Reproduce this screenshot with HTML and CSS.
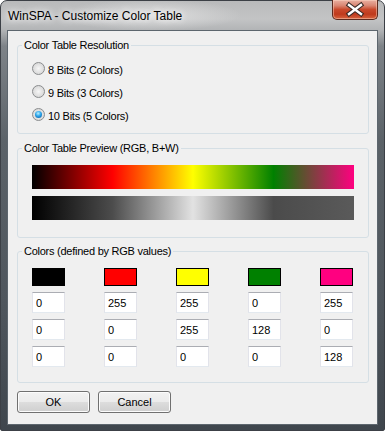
FILE: index.html
```html
<!DOCTYPE html>
<html lang="en">
<head>
  <meta charset="UTF-8">
  <title>WinSPA - Customize Color Table</title>
  <link rel="stylesheet" href="styles.css">
</head>
<body>

  <div class="window">
    <div class="titlebar">
      <span class="title">WinSPA - Customize Color Table</span>
      <button class="close-button">
        <svg width="44" height="19" viewBox="0 0 44 19">
          <path d="M16 5 L28 14 M28 5 L16 14" stroke="#3b2a26" stroke-width="4.6" stroke-linecap="square"/>
          <path d="M16 5 L28 14 M28 5 L16 14" stroke="#ffffff" stroke-width="2.4" stroke-linecap="square"/>
        </svg>
      </button>
    </div>

    <div class="client">

      <div class="group">
        <span class="group-title">Color Table Resolution</span>
        <div class="radios">
          <label class="radio-row"><span class="radio"></span>8 Bits (2 Colors)</label>
          <label class="radio-row"><span class="radio"></span>9 Bits (3 Colors)</label>
          <label class="radio-row"><span class="radio checked"></span>10 Bits (5 Colors)</label>
        </div>
      </div>

      <div class="group group-preview">
        <span class="group-title">Color Table Preview (RGB, B+W)</span>
        <div class="bar bar-rgb"></div>
        <div class="bar bar-gray"></div>
      </div>

      <div class="group group-colors">
        <span class="group-title">Colors (defined by RGB values)</span>
        <div class="color-grid">
          <div class="swatch" style="background:#000000"></div>
          <div class="swatch" style="background:#ff0000"></div>
          <div class="swatch" style="background:#ffff00"></div>
          <div class="swatch" style="background:#008000"></div>
          <div class="swatch" style="background:#ff0080"></div>

          <input class="value" type="text" value="0">
          <input class="value" type="text" value="255">
          <input class="value" type="text" value="255">
          <input class="value" type="text" value="0">
          <input class="value" type="text" value="255">

          <input class="value" type="text" value="0">
          <input class="value" type="text" value="0">
          <input class="value" type="text" value="255">
          <input class="value" type="text" value="128">
          <input class="value" type="text" value="0">

          <input class="value" type="text" value="0">
          <input class="value" type="text" value="0">
          <input class="value" type="text" value="0">
          <input class="value" type="text" value="0">
          <input class="value" type="text" value="128">
        </div>
      </div>

      <div class="buttons">
        <button class="dialog-button">OK</button>
        <button class="dialog-button">Cancel</button>
      </div>

    </div>
  </div>

</body>
</html>
```

FILE: styles.css
```css
html, body {
  margin: 0;
  padding: 0;
  background: #ffffff;
}
body {
  font-family: "Liberation Sans", Arial, sans-serif;
  font-size: 11px;
  color: #000000;
}
.window {
  box-sizing: border-box;
  width: 385px;
  height: 431px;
  display: flex;
  flex-direction: column;
  padding: 0 6px 5px 6px;
  border: 1px solid #3c4046;
  border-radius: 7px 7px 2px 2px;
  background:
    radial-gradient(ellipse 90px 16px at 150px 14px, rgba(235, 235, 235, 0.7), rgba(235, 235, 235, 0)),
    linear-gradient(to bottom, #b9babb 0, #c3c4c5 18px, #b2b4b6 29px, #7e8388 45px, #5b6268 140px, #4f565d 300px, #3f464d 100%);
}
.titlebar {
  height: 29px;
  display: flex;
  justify-content: space-between;
  align-items: flex-start;
}
.title {
  margin-top: 8px;
  padding-left: 1px;
  font-size: 12px;
  text-shadow: 0 0 6px #ffffff, 0 0 10px rgba(255, 255, 255, 0.8);
}
.close-button {
  width: 46px;
  height: 20px;
  padding: 0;
  margin: -1px 0 0 0;
  border: 1px solid #5c2a1f;
  border-top: none;
  border-radius: 0 0 5px 5px;
  background: linear-gradient(to bottom, #e9b0a2 0, #d98571 30%, #c9492c 50%, #bf3a1d 75%, #d8643f 100%);
  box-shadow: inset 0 0 0 1px rgba(255, 220, 200, 0.45);
  display: flex;
  align-items: center;
  justify-content: center;
}
.client {
  flex: 1;
  display: flex;
  flex-direction: column;
  padding: 0 8px 0 9px;
  border: 1px solid #5d666e;
  background: #f0f0f0;
}
.group {
  margin-top: 14px;
  border: 1px solid #d5dfe5;
  border-radius: 3px;
  padding: 0 14px 6px 14px;
  letter-spacing: -0.25px;
}
.group-title {
  display: block;
  width: max-content;
  margin: -7px 0 0 -10px;
  padding: 0 2px;
  line-height: 13px;
  background: #f0f0f0;
}
.radios {
  padding-top: 6px;
}
.radio-row {
  height: 23px;
  display: flex;
  align-items: center;
  gap: 3px;
}
.radio {
  box-sizing: border-box;
  width: 13px;
  height: 13px;
  margin-top: -2px;
  border-radius: 50%;
  border: 1px solid #8a8c8e;
  background: radial-gradient(circle at 50% 50%, #f6f6f6 0, #e4e4e4 45%, #cfcfcf 100%);
  display: flex;
  align-items: center;
  justify-content: center;
}
.radio.checked::after {
  content: "";
  width: 7px;
  height: 7px;
  border-radius: 50%;
  background: radial-gradient(circle at 45% 35%, #b8f0ff 0, #2aa4ea 45%, #0a4f94 100%);
}
.group-preview {
  padding-bottom: 17px;
}
.bar {
  height: 24px;
}
.bar-rgb {
  margin-top: 10px;
  background: linear-gradient(to right, #000000 0%, #ff0000 25%, #ffff00 50%, #008000 75%, #ff0080 100%);
}
.bar-gray {
  margin-top: 7px;
  background: linear-gradient(to right, #000000 0%, #4c4c4c 25%, #e2e2e2 50%, #4b4b4b 75%, #5a5a5a 100%);
}
.group-colors {
  margin-top: 13px;
  padding-bottom: 15px;
}
.color-grid {
  margin-top: 10px;
  display: grid;
  grid-template-columns: repeat(5, 33px);
  column-gap: 39px;
  row-gap: 6px;
}
.swatch {
  box-sizing: border-box;
  height: 18px;
  border: 1px solid #000000;
}
.value {
  box-sizing: border-box;
  width: 33px;
  height: 21px;
  margin: 0;
  padding: 0 0 0 3px;
  font-family: "Liberation Sans", Arial, sans-serif;
  font-size: 11px;
  color: #000000;
  background: #ffffff;
  border: 1px solid #e2e3ea;
  border-top-color: #abadb3;
  border-bottom-color: #e3e9ef;
  outline: none;
}
.buttons {
  margin-top: 8px;
  display: flex;
  gap: 8px;
}
.dialog-button {
  width: 73px;
  height: 22px;
  padding: 0;
  font-family: "Liberation Sans", Arial, sans-serif;
  font-size: 11px;
  color: #000000;
  border: 1px solid #707070;
  border-radius: 3px;
  background: linear-gradient(to bottom, #f2f2f2 0%, #ebebeb 50%, #dddddd 50%, #cfcfcf 100%);
  box-shadow: inset 0 0 0 1px #fcfcfc;
}
```
